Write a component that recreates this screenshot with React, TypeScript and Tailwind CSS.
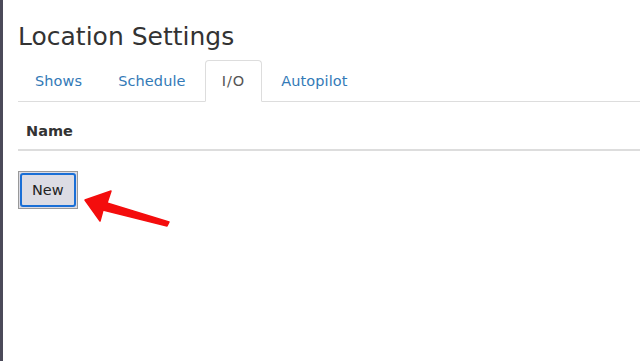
import React from "react";

const tabs = ["Shows", "Schedule", "I/O", "Autopilot"];

const Arrow = () => (
  <svg className="absolute left-0 top-0" width="640" height="361" viewBox="0 0 640 361">
    <polygon
      points="85,200 111,191 107,203 169,222 167,226 103,210 100,221"
      fill="#f40d0d"
      stroke="#f40d0d"
      strokeWidth="1.5"
      strokeLinejoin="round"
    />
  </svg>
);

export default function App() {
  return (
    <div
      className="relative flex h-[361px] w-[640px] overflow-hidden bg-white text-[#333]"
      style={{ fontFamily: '"DejaVu Sans", Verdana, sans-serif' }}
    >
      <div className="w-[3px] shrink-0 bg-[#4b4a59]" />
      <div className="flex-1 pl-[15px]">
        <h3 className="mt-[23px] mb-[10px] text-[25px] leading-[27px] text-[#333]">Location Settings</h3>
        <ul className="flex border-b border-[#ddd] text-[14.5px] leading-[20px] tracking-[0.1px]">
          {tabs.map((t) => (
            <li key={t} className="mr-[2px] -mb-px">
              {t === "I/O" ? (
                <span className="block rounded-t-[4px] border border-[#ddd] border-b-white bg-white px-[16px] py-[10px] tracking-[1px] text-[#555]">
                  {t}
                </span>
              ) : (
                <span className="block border border-transparent px-[16px] py-[10px] text-[#337ab7]">{t}</span>
              )}
            </li>
          ))}
        </ul>
        <table className="mt-[11px] w-full text-[14.5px] leading-[20px]">
          <thead>
            <tr>
              <th className="border-b-2 border-[#ddd] p-[8px] text-left font-bold">Name</th>
            </tr>
          </thead>
        </table>
        <div className="mt-[20px]">
          <button className="border border-[#999] bg-[#dcdce4] p-[1px]">
            <span className="block rounded-[3px] border-2 border-[#1a6fd6] px-[10px] py-[5px] text-[14.5px] leading-[20px] text-[#222]">
              New
            </span>
          </button>
        </div>
      </div>
      <Arrow />
    </div>
  );
}
